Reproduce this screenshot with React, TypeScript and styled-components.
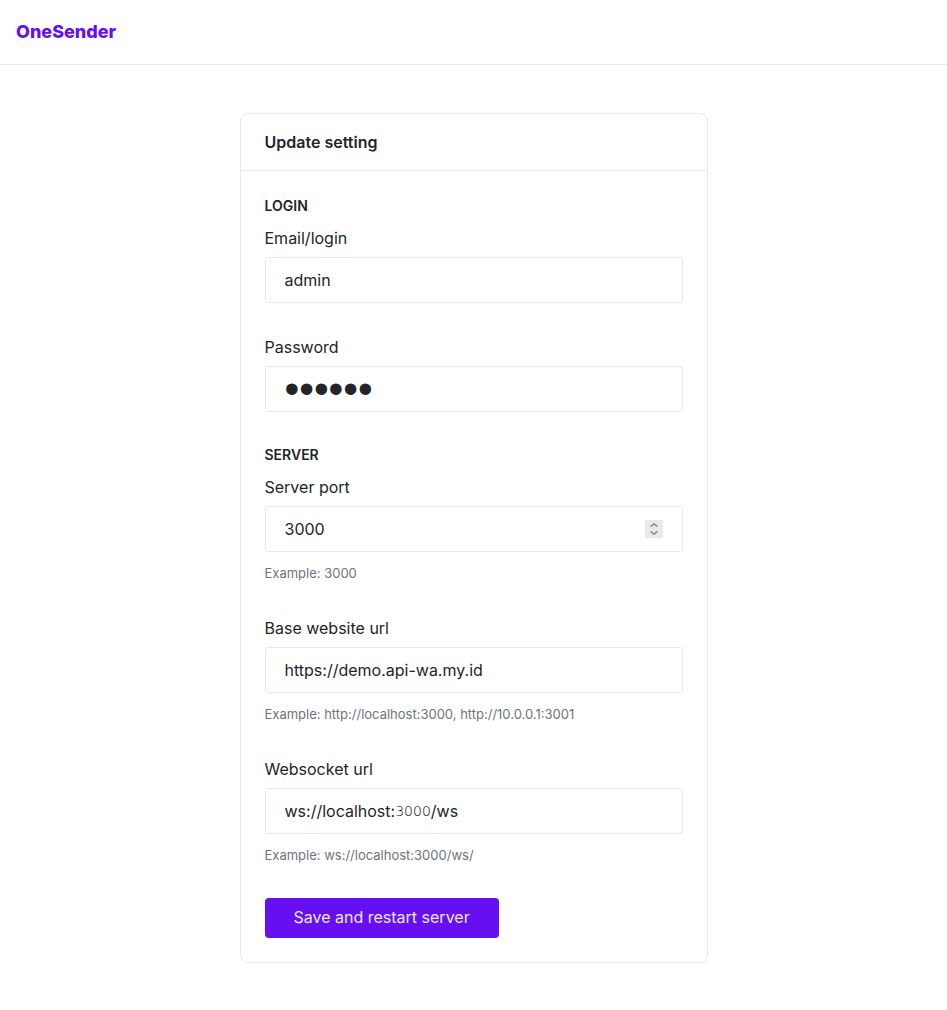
import React, { useState } from "react";
import styled, { createGlobalStyle } from "styled-components";

const GlobalStyle = createGlobalStyle`
  *, *::before, *::after { box-sizing: border-box; }
  body {
    margin: 0;
    background: #fff;
    color: #212529;
    font-family: Inter, "Liberation Sans", sans-serif;
    font-size: 16px;
    line-height: 24px;
  }
`;

const Navbar = styled.header`
  display: flex;
  align-items: center;
  height: 65px;
  padding: 0 16px;
  border-bottom: 1px solid #e7eaec;
`;

const Brand = styled.a`
  color: #6610f2;
  font-size: 18px;
  font-weight: 800;
  text-decoration: none;
`;

const Main = styled.main`
  display: flex;
  justify-content: center;
  padding: 48px 16px;
`;

const Card = styled.section`
  width: 100%;
  max-width: 468px;
  border: 1px solid #e7e9ec;
  border-radius: 8px;
`;

const CardHeader = styled.div`
  padding: 16px 24px;
  border-bottom: 1px solid #e7e9ec;
`;

const CardTitle = styled.h1`
  margin: 0;
  font-size: 16px;
  font-weight: 600;
`;

const Form = styled.form`
  display: flex;
  flex-direction: column;
  align-items: flex-start;
  gap: 32px;
  padding: 24px;
`;

const Section = styled.section`
  display: flex;
  flex-direction: column;
  gap: 32px;
  width: 100%;
`;

const SectionTitle = styled.h2`
  margin: 0 0 -22px;
  font-size: 14px;
  font-weight: 600;
  line-height: 21px;
  text-transform: uppercase;
`;

const Field = styled.div`
  display: flex;
  flex-direction: column;
`;

const Label = styled.label`
  margin-bottom: 7px;
`;

const Control = styled.div`
  display: flex;
  align-items: center;
  height: 46px;
  padding: 0 19px;
  border: 1px solid #e7e9ec;
  border-radius: 3px;
  &:focus-within { border-color: #6610f2; }
`;

const Input = styled.input`
  flex: 1;
  min-width: 0;
  padding: 0;
  border: 0;
  outline: 0;
  background: transparent;
  color: inherit;
  font: inherit;
  appearance: textfield;
  &::-webkit-inner-spin-button { display: none; }
  &[type="password"] {
    height: 44px;
    font-family: "Liberation Sans", sans-serif;
    font-size: 42px;
    line-height: 44px;
  }
`;

const UrlPart = styled(Input)<{ $light?: boolean }>`
  flex: none;
  field-sizing: content;
  ${(p) => p.$light && `
    color: #000;
    font-family: "DejaVu Sans", sans-serif;
    font-size: 14px;
    font-weight: 200;
  `}
`;

const Stepper = styled.div`
  display: flex;
  flex-direction: column;
  width: 18px;
  height: 18px;
  padding: 1px 0;
  background: #e9e9ed;
`;

const StepButton = styled.button`
  display: flex;
  flex: 1;
  align-items: center;
  justify-content: center;
  padding: 0;
  border: 0;
  background: transparent;
  color: #8f8f9d;
`;

const Help = styled.small`
  margin: 11px 0 1px;
  color: #6c757d;
  font-size: 13px;
  line-height: 20px;
`;

const SaveButton = styled.button`
  height: 40px;
  padding: 0 29px 2px;
  border: 0;
  border-radius: 4px;
  background: #6610f2;
  color: #f0e7fe;
  font: inherit;
`;

type TextFieldProps = {
  id: string;
  label: string;
  type?: string;
  value: string;
  help?: string;
};

function TextField({ id, label, type = "text", value, help }: TextFieldProps) {
  return (
    <Field>
      <Label htmlFor={id}>{label}</Label>
      <Control>
        <Input id={id} type={type} defaultValue={value} />
      </Control>
      {help && <Help>{help}</Help>}
    </Field>
  );
}

function PortField() {
  const [port, setPort] = useState(3000);
  return (
    <Field>
      <Label htmlFor="port">Server port</Label>
      <Control>
        <Input id="port" type="number" value={port} onChange={(e) => setPort(Number(e.target.value))} />
        <Stepper>
          <StepButton type="button" aria-label="Increase port" onClick={() => setPort(port + 1)}>
            <svg width="8" height="4" viewBox="0 0 8 4" fill="none" stroke="currentColor" strokeWidth="1.5">
              <path d="M.5 3.700 4 .8l3.500 2.900" />
            </svg>
          </StepButton>
          <StepButton type="button" aria-label="Decrease port" onClick={() => setPort(port - 1)}>
            <svg width="8" height="4" viewBox="0 0 8 4" fill="none" stroke="currentColor" strokeWidth="1.5">
              <path d="M.5 .3 4 3.200 7.500 .3" />
            </svg>
          </StepButton>
        </Stepper>
      </Control>
      <Help>Example: 3000</Help>
    </Field>
  );
}

function WebsocketField() {
  return (
    <Field>
      <Label htmlFor="ws-host">Websocket url</Label>
      <Control>
        <UrlPart id="ws-host" defaultValue="ws://localhost:" />
        <UrlPart $light aria-label="Websocket port" defaultValue="3000" />
        <UrlPart aria-label="Websocket path" defaultValue="/ws" />
      </Control>
      <Help>Example: ws://localhost:3000/ws/</Help>
    </Field>
  );
}

export default function App() {
  return (
    <>
      <GlobalStyle />
      <Navbar>
        <Brand href="#">OneSender</Brand>
      </Navbar>
      <Main>
        <Card>
          <CardHeader>
            <CardTitle>Update setting</CardTitle>
          </CardHeader>
          <Form onSubmit={(e) => e.preventDefault()}>
            <Section>
              <SectionTitle>Login</SectionTitle>
              <TextField id="login" label="Email/login" value="admin" />
              <TextField id="password" label="Password" type="password" value="secret" />
            </Section>
            <Section>
              <SectionTitle>Server</SectionTitle>
              <PortField />
              <TextField
                id="base-url"
                label="Base website url"
                value="https://demo.api-wa.my.id"
                help="Example: http://localhost:3000, http://10.0.0.1:3001"
              />
              <WebsocketField />
            </Section>
            <SaveButton type="submit">Save and restart server</SaveButton>
          </Form>
        </Card>
      </Main>
    </>
  );
}
